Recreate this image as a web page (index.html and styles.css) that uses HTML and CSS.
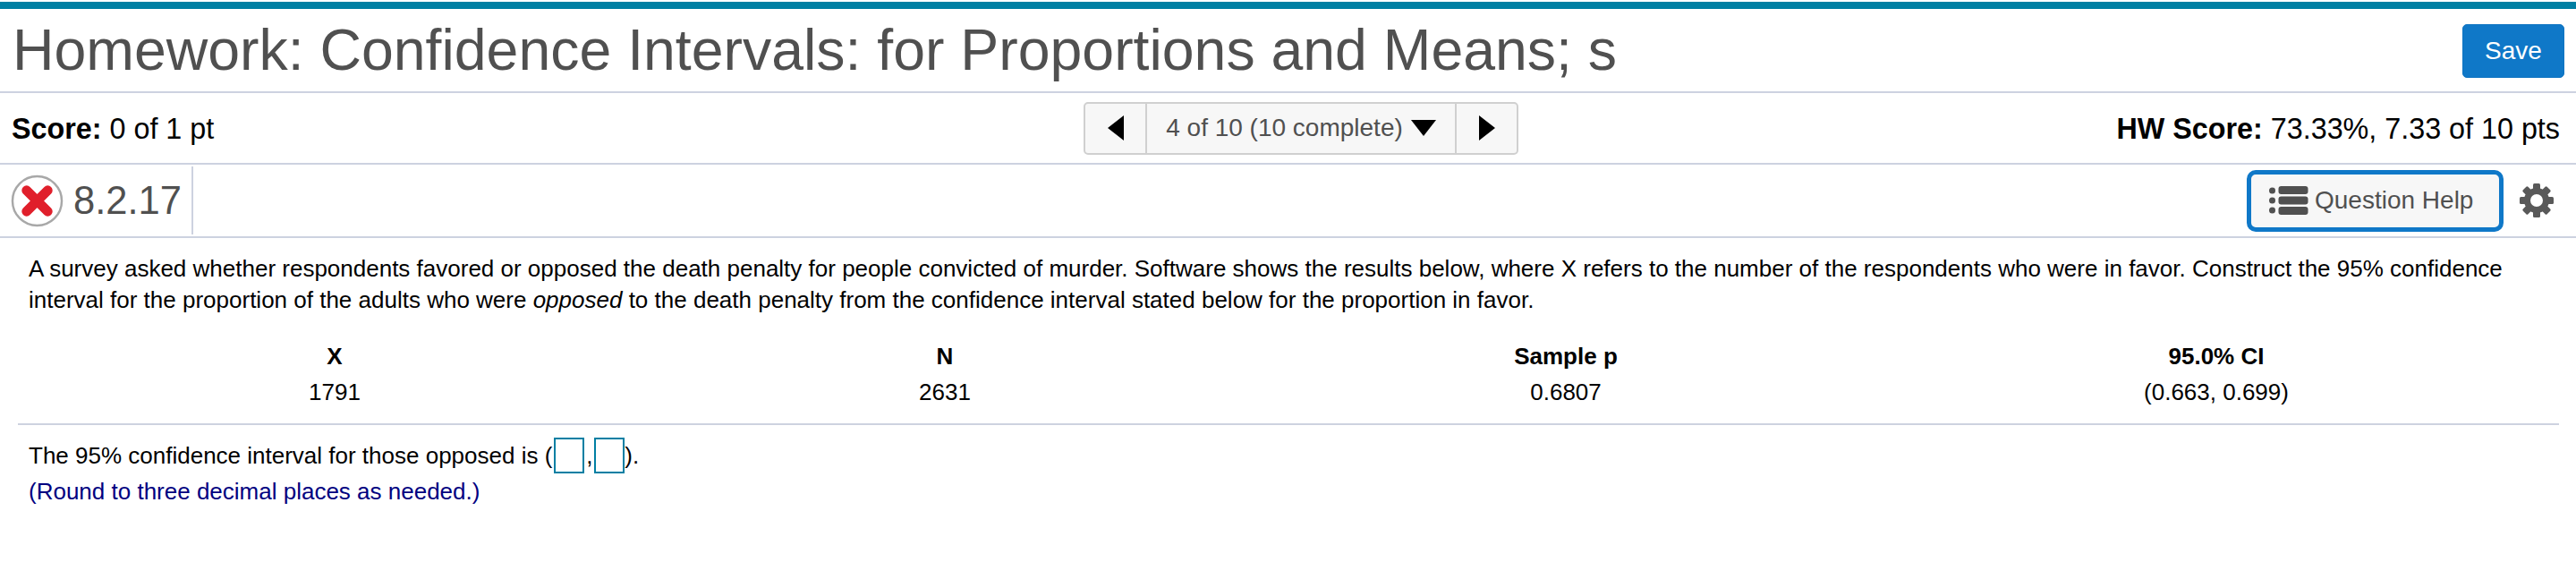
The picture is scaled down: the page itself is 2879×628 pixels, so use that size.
FILE: index.html
```html
<!DOCTYPE html>
<html lang="en">
<head>
  <meta charset="UTF-8" />
  <title>Homework</title>
  <link rel="stylesheet" href="styles.css">
</head>
<body>

  <div class="title-row">
    <h1 class="title">Homework: Confidence Intervals: for Proportions and Means; s</h1>
    <button class="save">Save</button>
  </div>

  <div class="score-row">
    <div class="score-cell"><b>Score:</b> 0 of 1 pt</div>
    <div class="nav">
      <div class="nav-btn"><span class="arrow-left"></span></div>
      <div class="nav-label">4 of 10 (10 complete)<span class="arrow-down"></span></div>
      <div class="nav-btn"><span class="arrow-right"></span></div>
    </div>
    <div class="score-cell hw-score"><b>HW Score:</b> 73.33%, 7.33 of 10 pts</div>
  </div>

  <div class="question-row">
    <div class="question-id">
      <svg class="wrong-icon" viewBox="0 0 60 60">
        <circle cx="30" cy="30" r="28" fill="#fff" stroke="#a8a8a8" stroke-width="2.5"/>
        <path d="M18 18 L42 42 M42 18 L18 42" stroke="#e01f2b" stroke-width="11" stroke-linecap="round"/>
      </svg>
      <span>8.2.17</span>
    </div>
    <div class="question-tools">
      <button class="help">
        <svg class="help-icon" viewBox="0 0 44 32">
          <circle cx="4" cy="5" r="3.5"/>
          <circle cx="4" cy="16" r="3.5"/>
          <circle cx="4" cy="27" r="3.5"/>
          <rect x="11" y="0" width="33" height="9" rx="3"/>
          <rect x="11" y="11.5" width="33" height="9" rx="3"/>
          <rect x="11" y="23" width="33" height="9" rx="3"/>
        </svg>
        Question Help
      </button>
      <svg class="gear" viewBox="0 0 38 38">
        <g fill="#595959">
          <rect x="15" y="0" width="8" height="38" rx="1.5"/>
          <rect x="15" y="0" width="8" height="38" rx="1.5" transform="rotate(45 19 19)"/>
          <rect x="15" y="0" width="8" height="38" rx="1.5" transform="rotate(90 19 19)"/>
          <rect x="15" y="0" width="8" height="38" rx="1.5" transform="rotate(135 19 19)"/>
        </g>
        <circle cx="19" cy="19" r="10.5" fill="#fff" stroke="#595959" stroke-width="7"/>
      </svg>
    </div>
  </div>

  <div class="content">
    <p class="intro">A survey asked whether respondents favored or opposed the death penalty for people convicted of murder. Software shows the results below, where X refers to the number of the respondents who were in favor. Construct the 95% confidence interval for the proportion of the adults who were <i>opposed</i> to the death penalty from the confidence interval stated below for the proportion in favor.</p>

    <div class="results">
      <b>X</b><b>N</b><b>Sample p</b><b>95.0% CI</b>
      <span>1791</span><span>2631</span><span>0.6807</span><span>(0.663, 0.699)</span>
    </div>

    <div class="answer">
      <div class="answer-line">The 95% confidence interval for those opposed is (<span class="box"></span><span class="comma">,</span><span class="box"></span>).</div>
      <div class="hint">(Round to three decimal places as needed.)</div>
    </div>
  </div>

</body>
</html>
```

FILE: styles.css
```css
* {
  box-sizing: border-box;
}

html, body {
  margin: 0;
  background: #fff;
  color: #000;
  font-family: 'Liberation Sans', Arial, sans-serif;
}

body {
  padding-top: 2px;
}

.title-row {
  display: flex;
  align-items: center;
  justify-content: space-between;
  height: 102px;
  padding: 0 13px 0 14px;
  border-top: 8px solid #007fa3;
  border-bottom: 2px solid #cdd2e0;
}

.title {
  margin: 0;
  font-size: 64.4px;
  font-weight: normal;
  color: #505050;
}

.save {
  width: 114px;
  height: 60px;
  margin-top: 2px;
  border: 1px solid #0f74c2;
  border-radius: 5px;
  background: #0f78c8;
  color: #fff;
  font: 28px 'Liberation Sans', Arial, sans-serif;
}

.score-row {
  display: grid;
  grid-template-columns: 1198px 486px 1fr;
  align-items: center;
  height: 80px;
  padding: 0 18px 0 13px;
  border-bottom: 2px solid #cdd2e0;
}

.score-cell {
  padding-top: 2px;
  font-size: 32.3px;
}

.hw-score {
  text-align: right;
}

.nav {
  display: flex;
  height: 59px;
  border: 2px solid #d0d0d0;
  border-radius: 5px;
  background: #f7f7f7;
}

.nav-btn {
  display: flex;
  align-items: center;
  justify-content: center;
  width: 67px;
}

.nav-label {
  display: flex;
  flex: 1;
  align-items: center;
  justify-content: center;
  border-left: 2px solid #d0d0d0;
  border-right: 2px solid #d0d0d0;
  font-size: 28px;
  color: #505050;
}

.arrow-left, .arrow-right {
  width: 0;
  height: 0;
  border-top: 14px solid transparent;
  border-bottom: 14px solid transparent;
}

.arrow-left { border-right: 18px solid #000; }
.arrow-right { border-left: 18px solid #000; }

.arrow-down {
  width: 0;
  height: 0;
  margin-left: 9px;
  border-left: 14px solid transparent;
  border-right: 14px solid transparent;
  border-top: 18px solid #000;
}

.question-row {
  display: flex;
  align-items: center;
  justify-content: space-between;
  height: 82px;
  padding: 0 25px 0 12px;
  border-bottom: 2px solid #cdd2e0;
}

.question-id {
  display: flex;
  align-items: center;
  gap: 11px;
  width: 204px;
  height: 76px;
  border-right: 2px solid #cdd2e0;
  font-size: 43.5px;
  color: #505050;
}

.wrong-icon {
  flex: none;
  width: 59px;
  height: 59px;
}

.question-tools {
  display: flex;
  align-items: center;
  gap: 18px;
}

.help {
  display: flex;
  align-items: center;
  gap: 7px;
  width: 287px;
  height: 69px;
  padding: 0 0 0 19px;
  border: 5px solid #0f78c8;
  border-radius: 10px;
  background: #f7f7f7;
  color: #505050;
  font: 28px 'Liberation Sans', Arial, sans-serif;
}

.help-icon {
  width: 45px;
  height: 32px;
  fill: #505050;
}

.gear {
  width: 38px;
  height: 38px;
}

.content {
  padding: 17px 19px 0 20px;
}

.intro {
  margin: 0;
  padding-left: 12px;
  font-size: 26px;
  line-height: 35px;
}

.results {
  display: grid;
  grid-template-columns: 708px 656px 732px 722px;
  grid-auto-rows: 40px;
  align-items: center;
  justify-items: center;
  height: 98px;
  margin-top: 24px;
  padding-top: 1px;
  border-bottom: 2px solid #cdd2e0;
  font-size: 26px;
}

.answer {
  padding: 14px 0 0 12px;
  font-size: 26px;
}

.answer-line {
  display: flex;
  align-items: center;
  height: 40px;
}

.box {
  width: 34px;
  height: 40px;
  margin-left: 2px;
  border: 2px solid #007fa3;
}

.comma {
  width: 7px;
  margin-left: 2px;
}

.hint {
  margin-top: 3px;
  line-height: 35px;
  color: #000080;
}
```
